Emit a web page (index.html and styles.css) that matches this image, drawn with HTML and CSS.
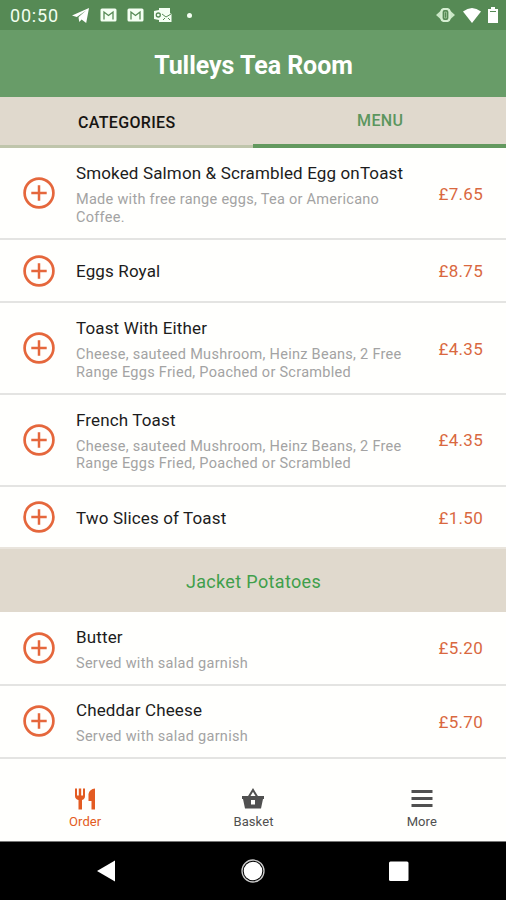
FILE: index.html
```html
<!DOCTYPE html>
<html lang="en">
<head>
<meta charset="utf-8">
<title>Tulleys Tea Room</title>
<link rel="stylesheet" href="styles.css">
</head>
<body>
<svg class="defs" width="0" height="0">
  <symbol id="plus" viewBox="0 0 32 32"><circle cx="16" cy="16" r="14.4" fill="none" stroke="currentColor" stroke-width="2.7"/><path d="M16 8.3v15.4M8.3 16h15.4" fill="none" stroke="currentColor" stroke-width="2.5"/></symbol>
  <symbol id="mail" viewBox="0 0 17 14"><rect x=".5" y=".5" width="16" height="13" rx="1.5" fill="#f4fff3"/><path d="M4 11.500V4l4.500 3.500L13 4v7.500" fill="none" stroke="#568a55" stroke-width="1.300"/></symbol>
</svg>
<div class="screen">
  <div class="status">
    <span class="clock">00:50</span>
    <svg class="telegram" viewBox="0 0 17 15"><path d="M0 7.6 17 0l-2.8 15-4.6-3.500-2.300 2.600-.8-4.700L14 2.500 4.800 8.900z" fill="#fff"/><path d="M6.500 9 13 3.500 9 11z" fill="#fff" opacity=".7"/></svg>
    <svg class="mail"><use href="#mail"/></svg>
    <svg class="mail"><use href="#mail"/></svg>
    <svg class="outlook" viewBox="0 0 18 14"><path d="M5 0h11v5l1.5 1v8H5v-2L0 11V3l5-1z" fill="#f4fff3"/><circle cx="4.3" cy="7" r="2" fill="none" stroke="#568a55" stroke-width="1.3"/><path d="M8 6l4 3 5-3M9 12l2-2M16 12l-2-2" fill="none" stroke="#568a55" stroke-width="1"/></svg>
    <span class="dot"></span>
    <svg class="vibrate" viewBox="0 0 19 14"><path d="M0 7l5-4.500v9zM19 7l-5-4.500v9z" fill="#c9e6c5"/><rect x="5.500" y="1" width="8" height="12" rx="3" fill="#568a55" stroke="#d6efd2" stroke-width="2.200"/><path d="M8.500 4h2v6h-2z" fill="#568a55" stroke="#a9cda5" stroke-width=".7"/></svg>
    <svg class="wifi" viewBox="0 0 18 15"><path d="M0 3.500Q9-3.500 18 3.500L9 15z" fill="#fff"/></svg>
    <svg class="battery" viewBox="0 0 10 16"><path d="M3 0h4v2h3v14H0V2h3z" fill="#fff"/><path d="M2 4.500h6" stroke="#568a55"/></svg>
  </div>
  <header class="header"><h1>Tulleys Tea Room</h1></header>
  <div class="tabs"><div class="tab">CATEGORIES</div><div class="tab active">MENU</div></div>
  <main class="list">
    <div class="item tall"><svg class="plus"><use href="#plus"/></svg><div class="copy"><h2>Smoked Salmon &amp; Scrambled Egg onToast</h2><p>Made with free range eggs, Tea or Americano<br>Coffee.</p></div><span class="price">£7.65</span></div>
    <div class="item"><svg class="plus"><use href="#plus"/></svg><div class="copy"><h2>Eggs Royal</h2></div><span class="price">£8.75</span></div>
    <div class="item tall"><svg class="plus"><use href="#plus"/></svg><div class="copy"><h2>Toast With Either</h2><p>Cheese, sauteed Mushroom, Heinz Beans, 2 Free<br>Range Eggs Fried, Poached or Scrambled</p></div><span class="price">£4.35</span></div>
    <div class="item tall"><svg class="plus"><use href="#plus"/></svg><div class="copy"><h2>French Toast</h2><p>Cheese, sauteed Mushroom, Heinz Beans, 2 Free<br>Range Eggs Fried, Poached or Scrambled</p></div><span class="price">£4.35</span></div>
    <div class="item last"><svg class="plus"><use href="#plus"/></svg><div class="copy"><h2>Two Slices of Toast</h2></div><span class="price">£1.50</span></div>
    <div class="section">Jacket Potatoes</div>
    <div class="item medium"><svg class="plus"><use href="#plus"/></svg><div class="copy"><h2>Butter</h2><p>Served with salad garnish</p></div><span class="price">£5.20</span></div>
    <div class="item medium"><svg class="plus"><use href="#plus"/></svg><div class="copy"><h2>Cheddar Cheese</h2><p>Served with salad garnish</p></div><span class="price">£5.70</span></div>
  </main>
  <nav class="nav">
    <div class="link current"><svg viewBox="0 0 24 24"><path d="M2 1.500h2v7h1.800v-7h2.400v7H10v-7h2V9q0 3-3 4v9.500H5.500V13Q2 12 2 9zM22 1.500v21h-3.500V14h-3V7q1-5 6.500-5.500z" fill="currentColor"/></svg><span>Order</span></div>
    <div class="link basket"><svg viewBox="0 0 24 24"><path d="M7 11l5-8 5 8" fill="none" stroke="currentColor" stroke-width="2"/><path fill-rule="evenodd" d="M1 9h22v3h-1l-2 9.500H4L2 12H1zM10 13v4.500h4V13z" fill="currentColor"/></svg><span>Basket</span></div>
    <div class="link"><svg viewBox="0 0 24 24"><path d="M1.500 4.500h21M1.500 11.500h21M1.500 18.500h21" stroke="currentColor" stroke-width="3"/></svg><span>More</span></div>
  </nav>
  <div class="system">
    <svg viewBox="0 0 24 24"><path d="M2 12 20 1.500v21z" fill="#fff"/></svg>
    <svg viewBox="0 0 24 24"><circle cx="12" cy="12" r="11" fill="none" stroke="#ccc" stroke-width="1.300"/><circle cx="12" cy="12" r="9.300" fill="#fff"/></svg>
    <svg viewBox="0 0 24 24"><rect x="2" y="2.500" width="19.500" height="19.500" rx="1.500" fill="#fff"/></svg>
  </div>
</div>
</body>
</html>
```
FILE: styles.css
```css
* { box-sizing: border-box; }
body { margin: 0; font-family: Roboto, sans-serif; background: #fffffd; }
h1, h2, p { margin: 0; font-weight: 400; }
.defs { display: block; }
.screen { width: 506px; height: 900px; display: flex; flex-direction: column; overflow: hidden; }
.status { height: 30px; flex: none; display: flex; align-items: center; background: #568a55; padding: 0 8px 0 10px; }
.clock { width: 62px; color: #f2fff0; font-size: 18px; letter-spacing: .8px; line-height: 30px; padding-top: 2px; }
.telegram { width: 17px; height: 15px; margin-right: 11px; }
.mail { width: 17px; height: 14px; margin-right: 10px; }
.outlook { width: 18px; height: 14px; margin-right: 15px; }
.dot { width: 5px; height: 5px; border-radius: 50%; background: #f4fff3; }
.vibrate { width: 19px; height: 14px; margin-left: auto; margin-right: 8px; }
.wifi { width: 18px; height: 15px; margin-right: 7px; }
.battery { width: 10px; height: 16px; }
.header { height: 67px; flex: none; display: flex; align-items: center; justify-content: center; background: #689c68; padding: 4px 0 0 1px; }
.header h1 { color: #fff; font-size: 25px; font-weight: 700; line-height: 30px; letter-spacing: -.05px; }
.tabs { height: 51px; flex: none; display: flex; background: #e0d9cd; }
.tab { flex: 1; text-align: center; color: #171512; font-size: 16px; font-weight: 500; line-height: 51px; letter-spacing: .35px; padding-left: 1px; border-bottom: 3px solid #bfc5ab; }
.active { color: #5c965e; line-height: 47px; padding-left: 2px; border-bottom: 4px solid #63995f; }
.list { flex: 1; min-height: 0; padding-top: .6px; }
.item { height: 63px; display: flex; align-items: center; padding: 0 23px; border-bottom: 2px solid #e4e4e2; }
.tall { height: 91.700px; }
.medium { height: 73.500px; }
.last { height: 62.800px; border-bottom-color: #e9e4dc; }
.plus { width: 32px; height: 32px; color: #e5673c; flex: none; margin-right: 21px; }
.copy { flex: 1; white-space: nowrap; padding-top: 1px; }
.copy h2 { color: #1c1c1c; font-size: 17px; line-height: 22px; letter-spacing: .14px; }
.copy p { color: #a3a3a3; font-size: 14.500px; line-height: 17.500px; letter-spacing: .28px; margin-top: 7px; margin-bottom: -1px; }
.price { color: #d9683f; font-size: 17px; letter-spacing: .3px; padding-top: 1px; }
.section { height: 62.600px; display: flex; align-items: center; justify-content: center; background: #e0d9cd; color: #3f9f4b; font-size: 18px; letter-spacing: .35px; padding: 2px 0 0 1px; }
.nav { height: 82px; flex: none; display: flex; padding-left: 1px; }
.link { flex: 1; display: flex; flex-direction: column; align-items: center; color: #505050; padding-top: 28px; font-size: 13px; letter-spacing: .1px; }
.link svg { width: 24px; height: 24px; }
.link span { line-height: 16px; margin-top: 3px; }
.current { color: #e35b22; }
.system { height: 59px; flex: none; display: flex; justify-content: center; align-items: center; gap: 122px; background: #000; border-top: 1px solid #777; }
.system svg { width: 24px; height: 24px; }
```
